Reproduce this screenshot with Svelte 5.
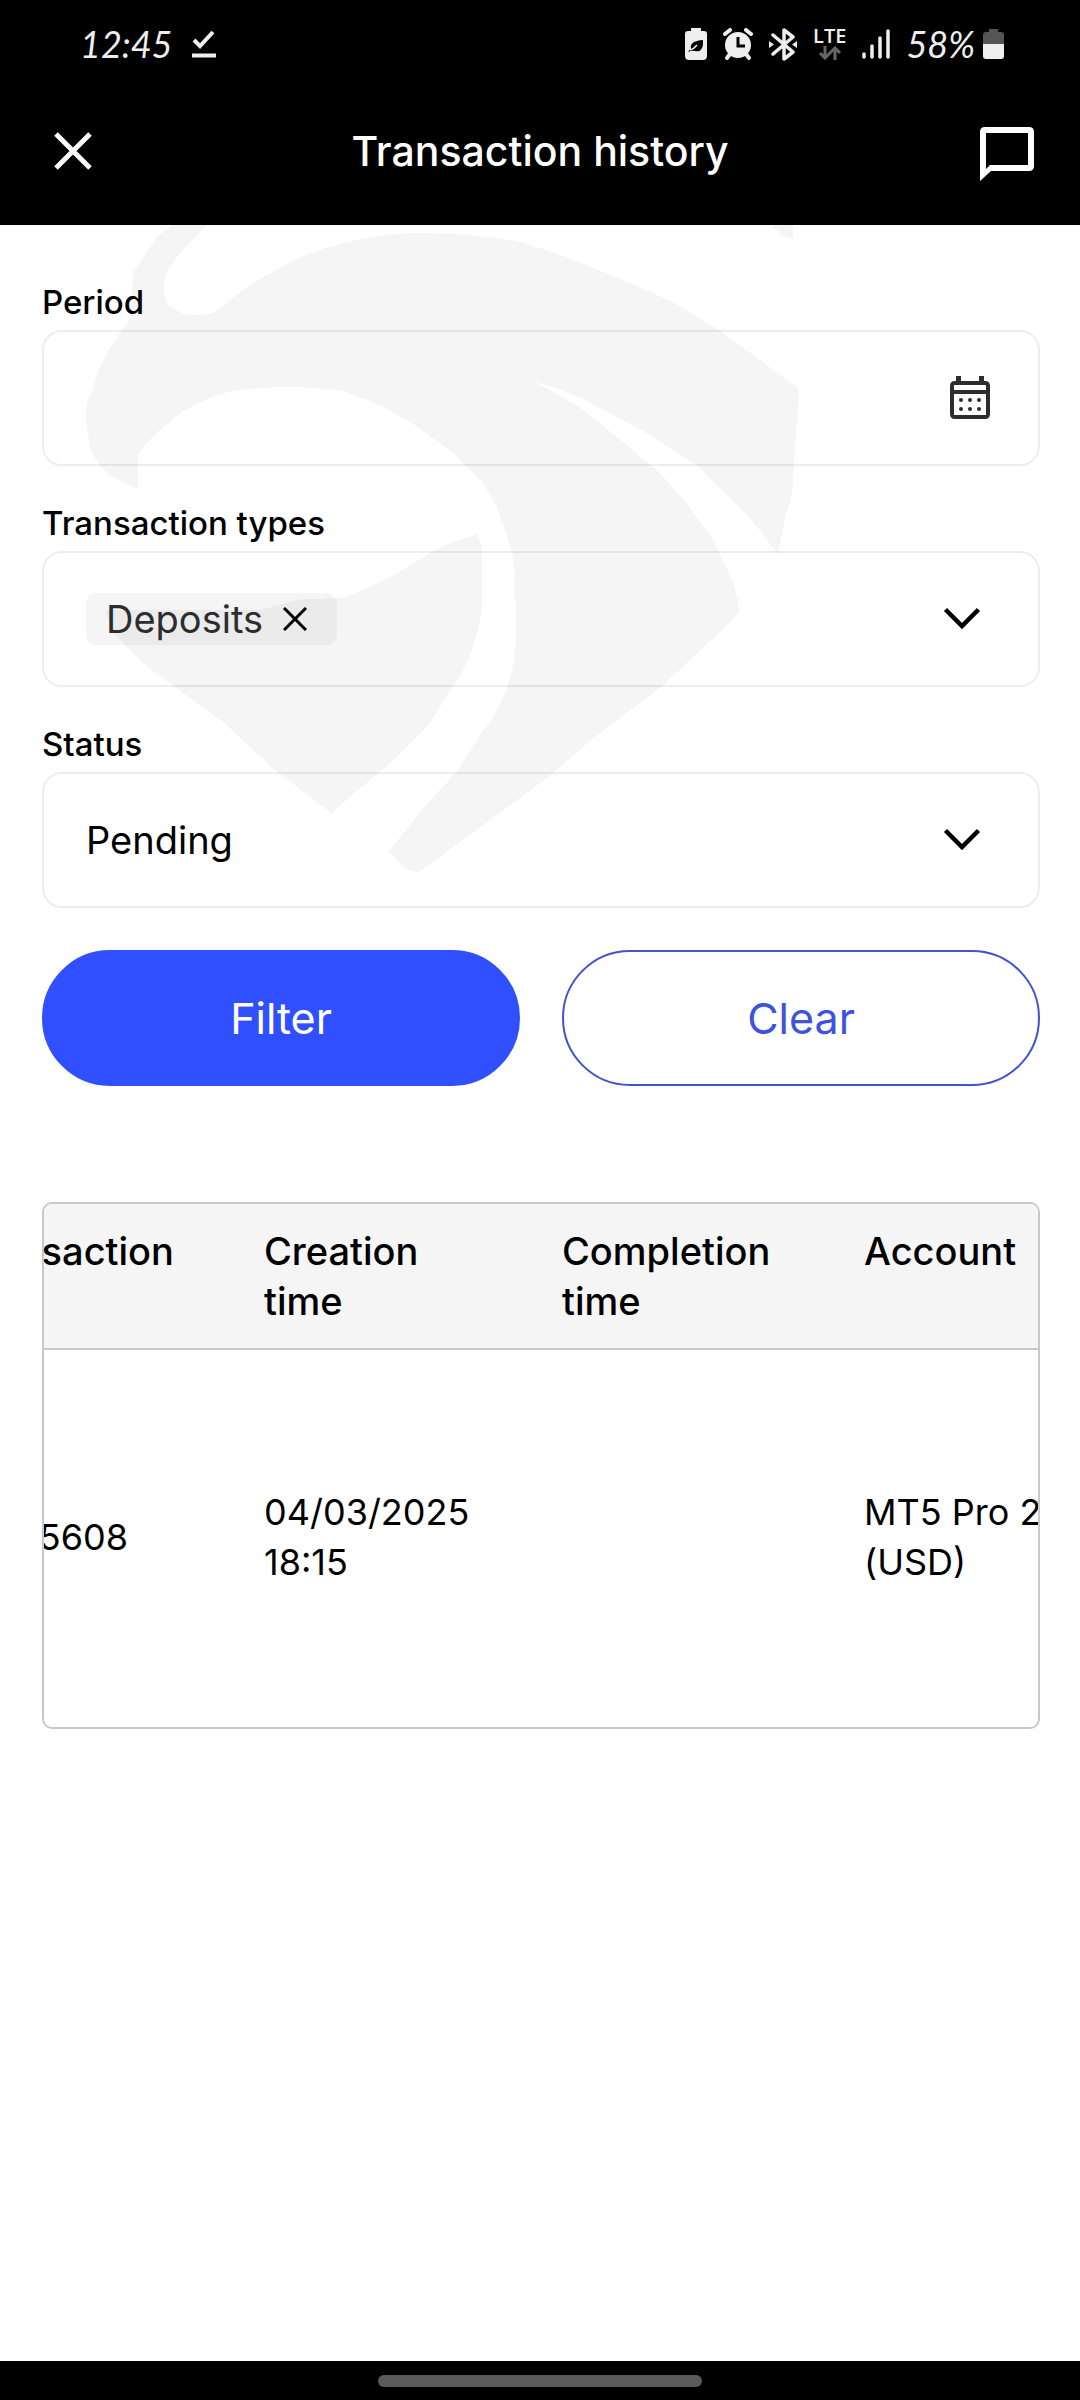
<script>
  import { onMount } from 'svelte';

  let period = $state('');
  let types = $state(['Deposits']);
  let status = $state('Pending');
  let tableBox;

  const statuses = ['Pending', 'Completed', 'Rejected'];
  const rows = [
    { id: '5608', created: '04/03/2025 18:15', completed: '', account: 'MT5 Pro 2 (USD)' }
  ];

  function removeType(type) {
    types = types.filter((t) => t !== type);
  }

  function clearAll() {
    period = '';
    types = [];
    status = 'Pending';
  }

  onMount(() => {
    tableBox.scrollLeft = 84;
  });
</script>

{#snippet chevron()}
  <svg class="chevron" viewBox="0 0 38 24" aria-hidden="true">
    <path d="M2.500 2.500L19 19L35.500 2.500" fill="none" stroke="#000" stroke-width="4.500" />
  </svg>
{/snippet}

<div class="page">
  <header>
    <div class="statusbar">
      <div class="group left">
        <span class="hand">12:45</span>
        <svg width="24" height="28" viewBox="0 0 24 28" aria-hidden="true">
          <path d="M2 10l6 6L21 2" fill="none" stroke="#eee" stroke-width="4" />
          <path d="M0 25.500h24" stroke="#eee" stroke-width="4" />
        </svg>
      </div>
      <div class="group right">
        <svg width="22" height="32" viewBox="0 0 22 32" aria-hidden="true">
          <path d="M6 0h10v3h3q3 0 3 3v22q0 4-4 4H4q-4 0-4-4V6q0-3 3-3h3z" fill="#eee" />
          <path d="M3 24q1-2 3-3q-2-8 12-9q1 13-8 11q-3-1-7 1z" fill="#000" />
          <path d="M5 22q4-1 7-5" fill="none" stroke="#eee" stroke-width="1.500" />
        </svg>
        <svg width="30" height="32" viewBox="0 0 30 32" aria-hidden="true">
          <circle cx="15" cy="17" r="13" fill="#eee" />
          <path d="M2 6l5-4M28 6l-5-4M7 26l-3 4M23 26l3 4" stroke="#eee" stroke-width="4" stroke-linecap="round" />
          <path d="M15 9v9h7" fill="none" stroke="#000" stroke-width="3" />
        </svg>
        <svg width="28" height="33" viewBox="0 0 28 33" aria-hidden="true">
          <path d="M4 7l20 17-9 7V2l9 7L4 26" fill="none" stroke="#eee" stroke-width="3.500" stroke-linejoin="round" stroke-linecap="round" />
          <path d="M0 13l5 3.500-5 3.500zM28 13l-5 3.500 5 3.500z" fill="#eee" />
        </svg>
        <span class="lte">
          LTE
          <svg width="24" height="14" viewBox="0 0 24 14" aria-hidden="true">
            <path d="M7 0v12M2 7l5 5 5-5M17 14V2M12 7l5-5 5 5" fill="none" stroke="#666" stroke-width="3" />
          </svg>
        </span>
        <svg width="28" height="30" viewBox="0 0 28 30" aria-hidden="true">
          <path d="M2 25v3M10 17v11M18 9v19M26 2v26" stroke="#eee" stroke-width="3.500" stroke-linecap="round" />
        </svg>
        <span class="hand percent">58%</span>
        <svg width="21" height="30" viewBox="0 0 21 30" aria-hidden="true">
          <path d="M6 0h9v3h3q3 0 3 3v10H0V6q0-3 3-3h3z" fill="#555" />
          <path d="M0 15h21v12q0 3-3 3H3q-3 0-3-3z" fill="#eee" />
        </svg>
      </div>
    </div>

    <div class="titlebar">
      <button class="icon-button close" aria-label="Close">
        <svg width="38" height="38" viewBox="0 0 38 38" aria-hidden="true">
          <path d="M2 2l34 34M36 2L2 36" stroke="#fff" stroke-width="5" />
        </svg>
      </button>
      <h1>Transaction history</h1>
      <button class="icon-button chat" aria-label="Chat">
        <svg width="54" height="54" viewBox="0 0 54 54" aria-hidden="true">
          <path d="M5 0h44q5 0 5 5v34q0 5-5 5H11L0 54V5q0-5 5-5zM6 6v36l4-4h38V6z" fill="#fff" fill-rule="evenodd" />
        </svg>
      </button>
    </div>
  </header>

  <main>
    <!-- brand watermark behind the form -->
    <svg class="watermark" viewBox="0 225 1080 660" aria-hidden="true">
      <g fill="#f5f5f5" shape-rendering="crispEdges">
        <path d="M172 225L157 237L145 255L133 272L131 317L110 348Q98 366 93 389Q84 405 86 422L91 451Q98 465 107 473L125 484L138 488V455Q150 437 165 426Q177 413 193 406Q219 391 248 389Q296 384 344 391L382 406L413 424L451 451L482 482L496 505L510 545Q516 565 515 589Q517 625 515 656Q512 678 503 697Q495 718 482 732L458 770L427 804L389 851L404 868L418 873L482 826L547 778L595 737L660 688L712 639L739 612Q737 588 726 567L712 538L688 505L660 473L623 442L578 406L535 382Q560 388 585 400L643 431L695 464L747 514L778 554L786 513Q794 495 793 478L799 389L760 360L719 330L671 301L616 277L561 255L517 241Q465 233 413 233Q375 235 344 243Q319 249 296 259L251 284L213 313Q198 317 183 314L167 304Q162 290 165 277Q172 261 183 250L207 225Z" />
        <path d="M477 534L482 545V603Q481 623 475 639Q470 660 458 679L430 723L389 764L331 813L275 770L224 723L145 665L114 634L105 610H259L303 599L344 598L389 578L444 545Z" />
        <path d="M772 225L782 236L793 239V225Z" />
      </g>
    </svg>

    <form onsubmit={(e) => e.preventDefault()}>
      <div class="field">
        <label for="period">Period</label>
        <div class="control">
          <input id="period" type="text" bind:value={period} />
          <button type="button" class="icon-button calendar" aria-label="Open calendar">
            <svg width="40" height="44" viewBox="0 0 40 44" aria-hidden="true">
              <path d="M6 0h5v5h18V0h5v5h1q5 0 5 5v28q0 5-5 5H5q-5 0-5-5V10q0-5 5-5h1zM4 9v5h32V9zM4 18v21h32V18z" fill="#2d2d2d" fill-rule="evenodd" />
              <g fill="#2d2d2d">
                <circle cx="11" cy="24" r="2" /><circle cx="20" cy="24" r="2" /><circle cx="29" cy="24" r="2" />
                <circle cx="11" cy="33" r="2" /><circle cx="20" cy="33" r="2" /><circle cx="29" cy="33" r="2" />
              </g>
            </svg>
          </button>
        </div>
      </div>

      <div class="field">
        <label for="types">Transaction types</label>
        <div class="control">
          <div class="chips">
            {#each types as type}
              <span class="chip">
                {type}
                <button type="button" class="icon-button" aria-label="Remove {type}" onclick={() => removeType(type)}>
                  <svg width="24" height="24" viewBox="0 0 24 24" aria-hidden="true">
                    <path d="M1 1l22 22M23 1L1 23" stroke="#000" stroke-width="3" />
                  </svg>
                </button>
              </span>
            {/each}
          </div>
          <button id="types" type="button" class="icon-button toggle">
            {@render chevron()}
          </button>
        </div>
      </div>

      <div class="field">
        <label for="status">Status</label>
        <div class="control">
          <select id="status" bind:value={status}>
            {#each statuses as s}
              <option value={s}>{s}</option>
            {/each}
          </select>
          <span class="toggle arrow">{@render chevron()}</span>
        </div>
      </div>

      <div class="actions">
        <button type="submit" class="filter">Filter</button>
        <button type="button" class="clear" onclick={clearAll}>Clear</button>
      </div>
    </form>

    <div class="table-box" bind:this={tableBox}>
      <table>
        <thead>
          <tr>
            <th class="id">Transaction</th>
            <th class="created">Creation time</th>
            <th class="completed">Completion time</th>
            <th>Account</th>
          </tr>
        </thead>
        <tbody>
          {#each rows as row}
            <tr>
              <td class="id">{row.id}</td>
              <td>{row.created}</td>
              <td>{row.completed}</td>
              <td>{row.account}</td>
            </tr>
          {/each}
        </tbody>
      </table>
    </div>
  </main>

  <footer>
    <div class="pill"></div>
  </footer>
</div>

<style>
  :global(body) {
    margin: 0;
    background: #fff;
  }

  .page {
    display: flex;
    flex-direction: column;
    min-height: 100vh;
    font-family: Inter, 'Open Sans', sans-serif;
    color: #000;
  }

  button,
  input,
  select {
    font-family: inherit;
    box-sizing: border-box;
  }

  svg {
    display: block;
  }

  .icon-button {
    padding: 0;
    border: none;
    background: none;
    cursor: pointer;
  }

  /* header */
  header {
    background: #000;
    color: #fff;
  }

  .statusbar {
    display: flex;
    justify-content: space-between;
    align-items: center;
    height: 88px;
    padding: 0 76px 0 80px;
  }

  .group {
    display: flex;
    align-items: center;
  }

  .left {
    gap: 20px;
  }

  .right {
    gap: 16px;
  }

  .hand {
    font-family: Lato, sans-serif;
    font-style: italic;
    font-size: 36px;
    line-height: 40px;
    color: #eee;
  }

  .percent {
    margin-right: -8px;
  }

  .lte {
    display: flex;
    flex-direction: column;
    align-items: center;
    gap: 2px;
    font-family: 'Open Sans', sans-serif;
    font-size: 20px;
    font-weight: 600;
    line-height: 16px;
    color: #eee;
  }

  .titlebar {
    display: flex;
    justify-content: space-between;
    align-items: center;
    height: 137px;
    padding: 0 46px 12px;
    box-sizing: border-box;
  }

  .close {
    padding: 0 8px;
  }

  .chat {
    padding-top: 6px;
  }

  h1 {
    margin: 0;
    font-size: 41px;
    font-weight: 500;
    line-height: 48px;
  }

  /* content */
  main {
    position: relative;
    flex: 1;
    padding: 57px 40px 0 42px;
  }

  .watermark {
    position: absolute;
    top: 0;
    left: 0;
    width: 100%;
    z-index: -1;
  }

  form {
    display: flex;
    flex-direction: column;
    gap: 37px;
  }

  .field {
    display: flex;
    flex-direction: column;
    gap: 8px;
  }

  label {
    font-size: 33px;
    font-weight: 500;
    line-height: 40px;
  }

  .control {
    display: flex;
    align-items: center;
    position: relative;
    height: 136px;
    border: 2px solid rgba(0, 0, 0, 0.07);
    border-radius: 20px;
    box-sizing: border-box;
  }

  .control input,
  .control select {
    flex: 1;
    min-width: 0;
    height: 100%;
    padding: 0 42px;
    border: none;
    background: none;
    font-size: 38px;
    color: #000;
    appearance: none;
  }

  .calendar {
    margin-right: 48px;
  }

  .chips {
    display: flex;
    flex: 1;
    gap: 12px;
    padding-left: 42px;
  }

  .chip {
    display: flex;
    align-items: center;
    gap: 20px;
    padding: 0 30px 0 20px;
    border-radius: 10px;
    background: rgba(0, 0, 0, 0.04);
    font-size: 38px;
    line-height: 52px;
    color: #2d2d2d;
  }

  .toggle {
    margin-right: 57px;
  }

  .arrow {
    position: absolute;
    right: 0;
    pointer-events: none;
  }

  .chevron {
    width: 38px;
    height: 24px;
  }

  .actions {
    display: flex;
    gap: 42px;
    margin-top: 5px;
  }

  .actions button {
    flex: 1;
    height: 136px;
    border: 2px solid #3050ff;
    border-radius: 68px;
    font-size: 43px;
    cursor: pointer;
  }

  .filter {
    background: #3050ff;
    color: #fff;
  }

  .actions .clear {
    border-color: #4054d0;
    background: #fff;
    color: #3c52e0;
  }

  /* table */
  .table-box {
    margin-top: 116px;
    border: 2px solid #c8c8c8;
    border-radius: 10px;
    overflow-x: auto;
    scrollbar-width: none;
  }

  table {
    width: 1200px;
    border-collapse: separate;
    border-spacing: 0;
    table-layout: fixed;
    font-size: 36px;
    line-height: 50px;
  }

  th,
  td {
    padding: 0;
    text-align: left;
  }

  th {
    padding: 22px 60px 22px 0;
    background: #f5f5f5;
    border-bottom: 2px solid #c8c8c8;
    font-size: 38px;
    font-weight: 500;
    vertical-align: top;
  }

  th.id {
    width: 244px;
  }

  th.created {
    width: 238px;
  }

  th.completed {
    width: 242px;
  }

  td {
    height: 373px;
    padding: 0 60px 4px 0;
  }

  td.id {
    padding-right: 136px;
    text-align: right;
  }

  /* gesture bar */
  footer {
    display: flex;
    justify-content: center;
    align-items: center;
    height: 39px;
    background: #000;
  }

  .pill {
    width: 30%;
    height: 12px;
    border-radius: 6px;
    background: #5a5a5a;
  }
</style>
